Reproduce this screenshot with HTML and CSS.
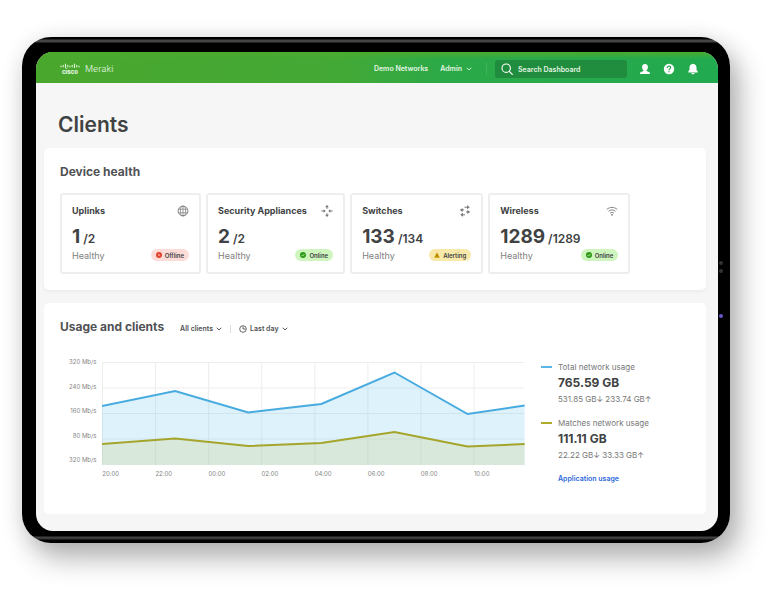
FILE: index.html
```html
<!DOCTYPE html>
<html lang="en">
<head>
<meta charset="utf-8">
<title>Clients - Meraki Dashboard</title>
<link rel="stylesheet" href="styles.css">
</head>
<body>
<div class="device">
  <div class="screen">
    <header class="topbar">
      <a class="brand" href="#">
        <span class="cisco">
          <svg width="20" height="6" viewBox="0 0 20 6" aria-hidden="true"><path d="M1 3v.8M3.200 2.300v1.500M5.500 1v3.600M7.800 2.300v1.500M10 3v.8M12.200 2.300v1.500M14.500 1v3.600M16.800 2.300v1.500M19 3v.8" stroke="#d5efc9" stroke-width="1.200" stroke-linecap="round"/></svg>
          <span>cisco</span>
        </span>
        <span class="meraki">Meraki</span>
      </a>
      <nav class="nav">
        <a href="#">Demo Networks</a>
        <button type="button">Admin <svg width="6" height="4" viewBox="0 0 6 4"><path d="M.7.8L3 2.900 5.300.8" fill="none" stroke="currentColor" stroke-width=".9"/></svg></button>
      </nav>
      <label class="search">
        <svg width="12" height="12" viewBox="0 0 12 12" aria-hidden="true"><circle cx="5.200" cy="5.200" r="4.200" fill="none" stroke="#fff" stroke-width="1.100"/><path d="M8.300 8.300l3 3" stroke="#fff" stroke-width="1.200" stroke-linecap="round"/></svg>
        <input type="text" placeholder="Search Dashboard" aria-label="Search Dashboard">
      </label>
      <div class="actions">
        <button type="button" aria-label="Account"><svg width="12" height="12" viewBox="0 0 12 12"><path d="M6 1C4.200 1 3.100 2.200 3.100 4c0 1.500.5 2.600 1.400 3.200v.7L2 8.900c-.7.300-1 .8-1 2.100h10c0-1.300-.3-1.800-1-2.100L7.500 7.900v-.7C8.400 6.600 8.900 5.500 8.900 4 8.900 2.200 7.800 1 6 1z" fill="#fff"/></svg></button>
        <button type="button" aria-label="Help"><svg width="12" height="12" viewBox="0 0 12 12"><circle cx="6" cy="6" r="5.200" fill="#fff"/><path d="M4.300 4.900C4.300 3.700 5 3.100 6 3.100s1.700.6 1.700 1.500C7.700 5.800 6 5.700 6 7.200" fill="none" stroke="#27a74b" stroke-width="1.100"/><circle cx="6" cy="8.800" r=".7" fill="#27a74b"/></svg></button>
        <button type="button" aria-label="Notifications"><svg width="12" height="12" viewBox="0 0 12 12"><path d="M6 .8C3.700 1 2.500 2.600 2.500 4.600v2.200L1.300 8.600v.8h9.400v-.8L9.500 6.800V4.600C9.500 2.600 8.300 1 6 .8z" fill="#fff"/><path d="M4.400 9.900h3.200C7.500 10.900 6.900 11.300 6 11.300s-1.500-.4-1.600-1.400z" fill="#fff"/></svg></button>
      </div>
    </header>

    <main class="page">
      <h1>Clients</h1>

      <section class="card health">
        <h2>Device health</h2>
        <div class="tiles">
          <article class="tile">
            <div class="row">
              <h3>Uplinks</h3>
              <svg class="icon" width="12" height="12" viewBox="0 0 12 12"><g fill="none" stroke="#777" stroke-width=".7"><circle cx="6" cy="6" r="4.900" stroke-width=".9"/><ellipse cx="6" cy="6" rx="2.600" ry="4.900"/><path d="M1.600 4.200h8.800M1.600 7.800h8.800M6 1v10"/></g></svg>
            </div>
            <p class="count"><b>1</b><span>/2</span></p>
            <div class="row foot"><span class="state">Healthy</span>
              <span class="badge offline"><svg width="6" height="6" viewBox="0 0 6 6"><circle cx="3" cy="3" r="3" fill="#e2452f"/><path d="M2 2l2 2M4 2L2 4" stroke="#f6a79b" stroke-width=".7"/></svg>Offline</span></div>
          </article>
          <article class="tile">
            <div class="row">
              <h3>Security Appliances</h3>
              <svg class="icon" width="12" height="12" viewBox="0 0 12 12"><g fill="none" stroke="#777" stroke-width="1"><path d="M6 .8v3M6 8.200v3M.4 6h3.200M8.400 6h3.200"/></g><path d="M6 .1l1.900 2.200H4.100zM6 11.900l1.900-2.200H4.100zM4.700 6L2.600 4.200v3.600zM7.300 6l2.100-1.800v3.600z" fill="#777"/></svg>
            </div>
            <p class="count"><b>2</b><span>/2</span></p>
            <div class="row foot"><span class="state">Healthy</span>
              <span class="badge online"><svg width="6" height="6" viewBox="0 0 6 6"><circle cx="3" cy="3" r="3" fill="#2c9a16"/><path d="M1.600 3.100l1 1 1.800-2" fill="none" stroke="#d5f5c5" stroke-width=".8"/></svg>Online</span></div>
          </article>
          <article class="tile">
            <div class="row">
              <h3>Switches</h3>
              <svg class="icon" width="12" height="12" viewBox="0 0 12 12"><path d="M5.500 2.200H9M7 6.900h3M2 4.900h3M3 9.800h3" fill="none" stroke="#777"/><path d="M8 .2l2.800 2L8 4.200zM8.400 4.900l2.800 2-2.800 2zM3.600 2.900l-2.800 2 2.800 2zM4 7.800l-2.800 2 2.800 2z" fill="#777"/></svg>
            </div>
            <p class="count"><b>133</b><span>/134</span></p>
            <div class="row foot"><span class="state">Healthy</span>
              <span class="badge alerting"><svg width="6" height="6" viewBox="0 0 6 6"><path d="M3 .3L5.900 5.700H.1z" fill="#c99a00"/><path d="M3 2.200v1.800M3 4.500v.6" stroke="#7c5c00" stroke-width=".6"/></svg>Alerting</span></div>
          </article>
          <article class="tile">
            <div class="row">
              <h3>Wireless</h3>
              <svg class="icon" width="12" height="12" viewBox="0 0 12 12"><g fill="none" stroke="#777" stroke-width=".9"><path d="M.8 4.400c3-2.700 7.400-2.700 10.400 0M2.500 6.300c2-1.800 5-1.800 7 0M4.100 8.200c1.100-1 2.700-1 3.800 0"/></g><circle cx="6" cy="9.800" r=".9" fill="#777"/></svg>
            </div>
            <p class="count"><b>1289</b><span>/1289</span></p>
            <div class="row foot"><span class="state">Healthy</span>
              <span class="badge online"><svg width="6" height="6" viewBox="0 0 6 6"><circle cx="3" cy="3" r="3" fill="#2c9a16"/><path d="M1.600 3.100l1 1 1.800-2" fill="none" stroke="#d5f5c5" stroke-width=".8"/></svg>Online</span></div>
          </article>
        </div>
      </section>

      <section class="card usage">
        <div class="usage-head">
          <h2>Usage and clients</h2>
          <label class="filter">
            <select aria-label="Clients"><option>All clients</option></select>
            <svg width="6" height="4" viewBox="0 0 6 4"><path d="M.7.8L3 2.900 5.300.8" fill="none" stroke="#444" stroke-width=".9"/></svg>
          </label>
          <label class="filter period">
            <svg width="8" height="8" viewBox="0 0 8 8"><circle cx="4" cy="4" r="3.300" fill="none" stroke="#444" stroke-width=".8"/><path d="M4 1.500V4h2.600" fill="none" stroke="#444" stroke-width=".8"/></svg>
            <select aria-label="Period"><option>Last day</option></select>
            <svg width="6" height="4" viewBox="0 0 6 4"><path d="M.7.8L3 2.900 5.300.8" fill="none" stroke="#444" stroke-width=".9"/></svg>
          </label>
        </div>
        <div class="usage-body">
          <div class="chart">
            <div class="y-axis"><span>320 Mb/s</span><span>240 Mb/s</span><span>160 Mb/s</span><span>80 Mb/s</span><span>320 Mb/s</span></div>
            <svg class="plot" viewBox="0 0 422 103" preserveAspectRatio="none" role="img" aria-label="Network usage">
              <path class="grid" d="M0 .5H422M0 26H422M0 51.500H422M0 77H422M.5 0V103M53.500 0V103M106.500 0V103M159.500 0V103M212.500 0V103M265.500 0V103M318.500 0V103M371.500 0V103"/>
              <path class="area-total" d="M0 44L73 29 146 50.500 219 42 292 10.500 365 52 422 43.500V103H0z"/>
              <path class="area-match" d="M0 82L73 76.500 146 84 219 81 292 70 365 84.500 422 82V103H0z"/>
              <path class="line-total" d="M0 44L73 29 146 50.500 219 42 292 10.500 365 52 422 43.500"/>
              <path class="line-match" d="M0 82L73 76.500 146 84 219 81 292 70 365 84.500 422 82"/>
            </svg>
            <div class="x-axis"><span>20:00</span><span>22:00</span><span>00:00</span><span>02:00</span><span>04:00</span><span>06:00</span><span>08:00</span><span>10:00</span></div>
          </div>
          <div class="legend">
            <div class="series total"><h4>Total network usage</h4><strong>765.59 GB</strong><p>531.85 GB↓ 233.74 GB↑</p></div>
            <div class="series match"><h4>Matches network usage</h4><strong>111.11 GB</strong><p>22.22 GB↓ 33.33 GB↑</p></div>
            <a href="#">Application usage</a>
          </div>
        </div>
      </section>
    </main>
  </div>
  <i class="sensor first"></i><i class="sensor second"></i><i class="sensor lens"></i>
</div>
</body>
</html>
```
FILE: styles.css
```css
* { box-sizing: border-box; }
body { margin: 0; padding: 37px 45px 50px 22px; background: #fff; color: #404244; font-family: Inter, "Liberation Sans", sans-serif; }
h1, h2, h3, h4, p { margin: 0; }
button { border: 0; padding: 0; background: none; color: inherit; font: inherit; }
a { text-decoration: none; color: inherit; }
svg { display: block; flex: none; }

.device {
  position: relative;
  padding: 15px 12px 12px 14px;
  border-radius: 29px;
  background: linear-gradient(#000 2px, #444 3px, #444 5px, #000 6px, #000 calc(100% - 7px), #444 calc(100% - 6px), #333 calc(100% - 4px), #000 calc(100% - 3px));
  box-shadow: 9px 15px 28px rgba(0, 0, 0, .3), 0 0 22px rgba(0, 0, 0, .08);
}
.screen { overflow: hidden; border-radius: 17px; background: #f6f6f6; padding-bottom: 17px; }

.topbar {
  display: flex;
  align-items: center;
  height: 31px;
  padding: 3px 19px 0 24px;
  color: #e4f6e4;
  background: linear-gradient(#4bab2e, transparent 7px), linear-gradient(90deg, #4aa72d, #43a936 45%, #2ba948 60%, #22aa50);
  font-size: 7px;
  font-weight: 600;
}
.brand { display: flex; align-items: center; gap: 5px; margin-right: auto; }
.cisco { display: flex; flex-direction: column; align-items: center; font-size: 6px; line-height: 6px; font-weight: 800; }
.meraki { font-size: 9px; font-weight: 300; line-height: 12px; }
.nav { display: flex; gap: 12px; padding-right: 14px; margin-right: 8px; border-right: 1px solid #42b35a; line-height: 12px; }
.nav button { display: flex; align-items: center; gap: 4px; }
.search { display: flex; align-items: center; gap: 5px; flex: 0 1 132px; min-width: 0; height: 18px; padding: 0 6px; border-radius: 3px; background: #208c3d; }
.search input { flex: 1; width: 0; min-width: 0; border: 0; padding: 0; background: none; color: #fff; font: inherit; }
.search input::placeholder { color: #e4f6e4; opacity: 1; }
.actions { display: flex; gap: 12px; margin-left: 12px; }

.page { padding: 0 12px 0 8px; }
h1 { padding: 29px 14px 11px; font-size: 21px; line-height: 25px; font-weight: 600; }
.card { border-radius: 5px; background: #fff; padding: 0 16px; }
.card h2 { font-size: 12px; line-height: 16px; font-weight: 700; color: #505254; }
.health { padding-top: 16px; padding-bottom: 16px; margin-bottom: 13px; box-shadow: 0 2px 3px #ececec; }
.tiles { display: grid; grid-template-columns: 141fr 139fr 133fr 142fr; gap: 5px; width: 91%; padding-right: 3px; margin-top: 13px; }
.tile { border: 2px solid #eee; border-radius: 3px; padding: 9px 10px 11px; }
.row { display: flex; align-items: center; justify-content: space-between; }
h3 { font-size: 9px; line-height: 13px; font-weight: 700; white-space: nowrap; }
.count { display: flex; align-items: baseline; gap: 3px; margin-top: 9px; line-height: 21px; font-weight: 600; }
.count b { font-size: 19px; font-weight: 700; }
.count span { font-size: 12px; }
.foot { height: 12px; }
.state { font-size: 9px; color: #808080; }
.badge { display: flex; align-items: center; gap: 3px; height: 12px; padding: 0 5px; border-radius: 6px; font-size: 6px; font-weight: 600; }
.offline { background: #fddcd8; }
.online { background: #cdf5bd; }
.alerting { background: #f9e9a9; }

.usage { padding-top: 16px; padding-bottom: 28px; }
.usage-head { display: flex; align-items: center; }
.filter { display: flex; align-items: center; gap: 3px; margin: 4px 0 0 16px; height: 8px; }
.filter select { appearance: none; field-sizing: content; border: 0; padding: 0; background: none; color: #505254; font: 600 7px/10px Inter, sans-serif; }
.period { margin-left: 8px; padding-left: 8px; border-left: 1px solid #ddd; }
.usage-body { display: flex; gap: 16px; margin-top: 24px; }
.chart { flex: 1; display: grid; grid-template: auto auto / auto 1fr; align-content: start; column-gap: 6px; padding-left: 9px; margin-top: 3px; font-size: 6px; line-height: 8px; color: #858585; }
.y-axis { display: flex; flex-direction: column; justify-content: space-between; align-items: flex-end; margin: -4px 0 1px; }
.plot { width: 100%; height: 103px; }
.plot path { vector-effect: non-scaling-stroke; fill: none; }
.plot .grid { stroke: #ededed; }
.plot .area-total { fill: #69c3ec; fill-opacity: .22; }
.plot .area-match { fill: #c9d28f; fill-opacity: .3; }
.plot .line-total { stroke: #48abe0; stroke-width: 2px; }
.plot .line-match { stroke: #a5a52c; stroke-width: 2px; }
.x-axis { grid-column: 2; display: grid; grid-template-columns: repeat(7, 53fr) 51fr; padding-top: 5px; }
.legend { width: 149px; padding-left: 17px; }
.series { position: relative; margin-bottom: 8px; }
.series::before { content: ""; position: absolute; left: -17px; top: 7px; width: 11px; height: 2px; background: #5bb5e5; }
.match::before { background: #b0ab2c; }
.series h4, .series p { font-size: 8px; line-height: 16px; font-weight: 400; color: #777; white-space: nowrap; }
.series strong { display: block; font-size: 12px; line-height: 16px; font-weight: 700; }
.legend a { display: block; font-size: 7px; line-height: 15px; font-weight: 600; color: #2c68dc; }

.sensor { position: absolute; right: 7px; width: 4px; height: 4px; border-radius: 50%; background: #333; }
.first { top: 224px; }
.second { top: 232px; }
.lens { top: 277px; background: #6b53c8; }
```
